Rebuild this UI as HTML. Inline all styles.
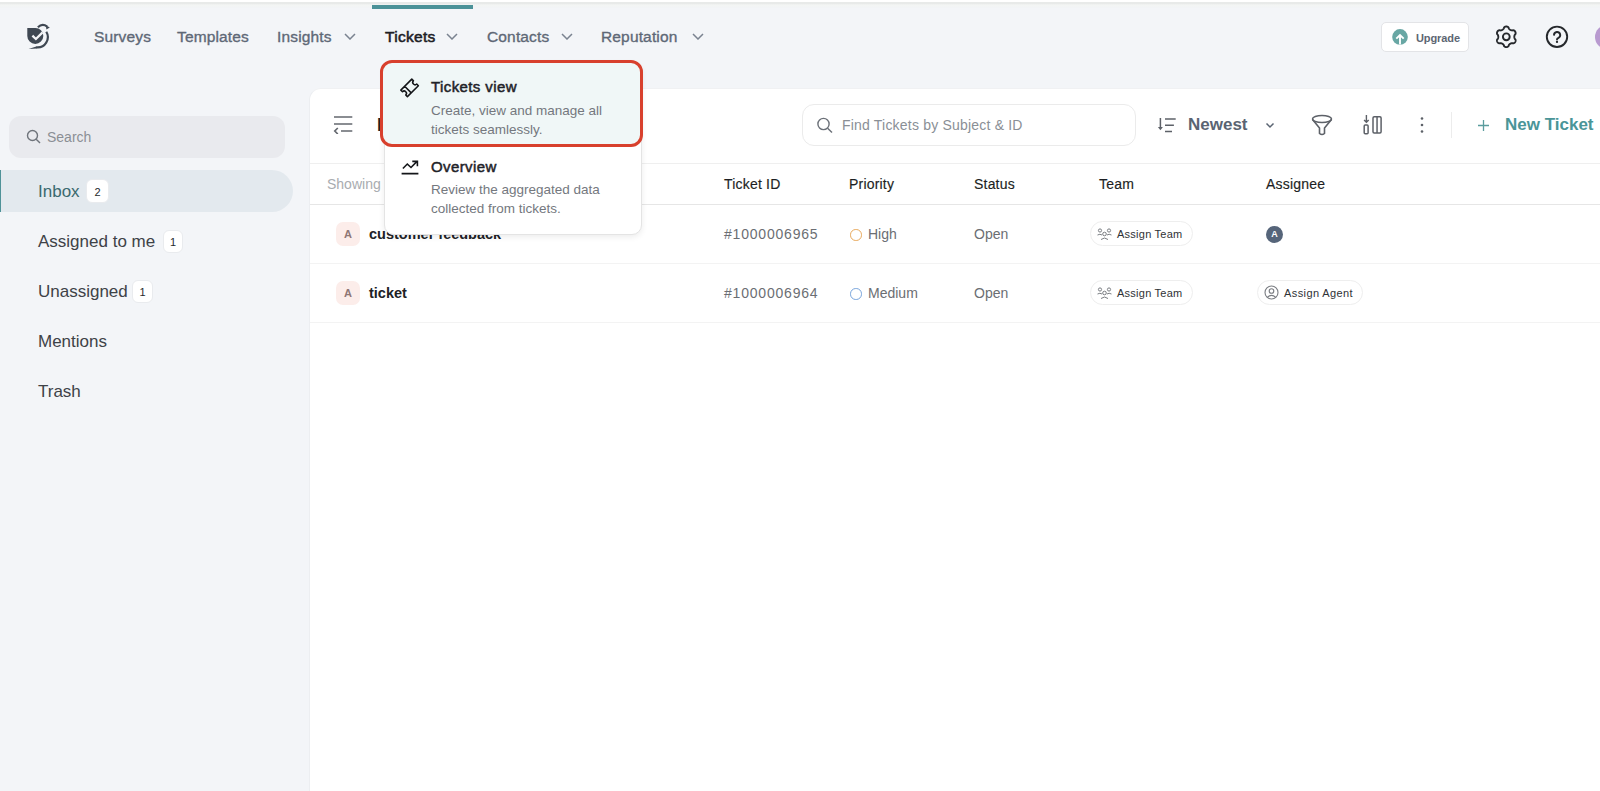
<!DOCTYPE html>
<html><head><meta charset="utf-8">
<style>
*{box-sizing:border-box;margin:0;padding:0}
html,body{width:1600px;height:791px;overflow:hidden}
body{background:#f3f5f8;font-family:"Liberation Sans",sans-serif;position:relative;color:#202226}
.a{position:absolute;white-space:nowrap}
#topstrip{left:0;top:0;width:1600px;height:2px;background:#fff}
#topline{left:0;top:2px;width:1600px;height:6px;background:linear-gradient(#e8eae9 0px,#e8eae9 1.5px,#f3f5f4 3px,#f2f4f6 6px)}
.nav{font-size:15.5px;letter-spacing:0.15px;color:#5e6876;top:28px;line-height:18px;-webkit-text-stroke:0.35px #5e6876}
.chev{width:12px;height:7px}
#panel{left:309px;top:88px;width:1300px;height:720px;background:#fff;border-top-left-radius:12px;border-left:1px solid #eceef1;border-top:1px solid #f0f1f3}
.side{font-size:17px;color:#3e4247;left:38px;line-height:20px;margin-top:1px}
.badge{background:#fff;border-radius:6px;font-size:11px;color:#26292d;text-align:center;border:1px solid #e9ebee}
.th{font-size:14px;letter-spacing:0.2px;-webkit-text-stroke:0.15px #1d1f23;color:#1d1f23;top:176px;line-height:16px}
.td{font-size:14px;color:#6b6e73;line-height:16px}
.tid{letter-spacing:0.8px}
.hline{left:310px;width:1290px;height:1px}
.pill{height:25px;border:1px solid #eeeeee;border-radius:13px;background:#fff}
.pill span{position:absolute;font-size:11px;letter-spacing:0.25px;color:#2f3236;top:5px;line-height:14px}
</style></head><body>
<div class="a" id="topstrip"></div>
<div class="a" id="topline"></div>

<!-- logo -->
<svg class="a" style="left:20px;top:18px" width="40" height="38" viewBox="0 0 40 38">
  <path d="M7.3 9.9 H15.4 A8 8 0 1 1 7.3 17.9 Z" fill="#3f4853"/>
  <path d="M12.4 17.6 L15.9 21 L22.6 14.4" stroke="#f3f4f7" stroke-width="2.3" fill="none"/>
  <path d="M17.9 9.2 Q22.3 4.8 27.2 8.6" stroke="#3f4853" stroke-width="2.2" fill="none"/>
  <path d="M25.8 7.2 L29.8 9.5 L26.4 11.4 Z" fill="#3f4853"/>
  <path d="M26.3 13.8 A10.3 10.3 0 0 1 16.5 29.4" stroke="#3f4853" stroke-width="2.2" fill="none"/><path d="M17 28.2 L8.6 30.9 L17 30.6 Z" fill="#3f4853"/>
</svg>

<!-- nav -->
<div class="a nav" style="left:94px">Surveys</div>
<div class="a nav" style="left:177px">Templates</div>
<div class="a nav" style="left:277px">Insights</div>
<svg class="a chev" style="left:344px;top:33px" viewBox="0 0 12 7"><path d="M1 1 L6 6 L11 1" stroke="#7a8390" stroke-width="1.5" fill="none"/></svg>
<div class="a" style="left:372px;top:5px;width:101px;height:3.5px;background:#4b9298"></div>
<div class="a nav" style="left:385px;color:#1d2025;font-weight:normal;letter-spacing:0.3px;font-size:15.5px;-webkit-text-stroke:0.55px #1d2025">Tickets</div>
<svg class="a chev" style="left:446px;top:33px" viewBox="0 0 12 7"><path d="M1 1 L6 6 L11 1" stroke="#7a8390" stroke-width="1.5" fill="none"/></svg>
<div class="a nav" style="left:487px">Contacts</div>
<svg class="a chev" style="left:561px;top:33px" viewBox="0 0 12 7"><path d="M1 1 L6 6 L11 1" stroke="#7a8390" stroke-width="1.5" fill="none"/></svg>
<div class="a nav" style="left:601px">Reputation</div>
<svg class="a chev" style="left:692px;top:33px" viewBox="0 0 12 7"><path d="M1 1 L6 6 L11 1" stroke="#7a8390" stroke-width="1.5" fill="none"/></svg>

<!-- right top -->
<div class="a" style="left:1381px;top:22px;width:88px;height:30px;background:#fff;border:1px solid #e3e4e7;border-radius:5px"></div>
<svg class="a" style="left:1391px;top:28px" width="18" height="18" viewBox="0 0 18 18"><circle cx="9" cy="8.9" r="7.8" fill="#68a7a4"/><path d="M9 16.6 V7.2 M5.3 10.7 L9 7 L12.7 10.7" stroke="#fff" stroke-width="1.9" fill="none"/></svg>
<div class="a" style="left:1416px;top:31px;font-size:11px;letter-spacing:-0.1px;font-weight:bold;color:#5d6672;line-height:14px">Upgrade</div>
<svg class="a" style="left:1494px;top:25px" width="25" height="25" viewBox="0 0 25 25"><path d="M20.30 11.80 L20.31 11.52 L20.34 11.24 L20.39 10.95 L20.47 10.65 L20.56 10.34 L20.69 10.02 L20.89 9.66 L21.38 9.20 L21.54 8.80 L21.61 8.41 L21.62 8.03 L21.58 7.67 L21.50 7.31 L21.38 6.97 L21.22 6.65 L21.02 6.35 L20.79 6.07 L20.52 5.83 L20.22 5.61 L19.89 5.43 L19.52 5.30 L19.10 5.24 L18.45 5.43 L18.04 5.42 L17.69 5.37 L17.38 5.30 L17.08 5.22 L16.81 5.12 L16.55 5.00 L16.30 4.87 L16.06 4.72 L15.83 4.56 L15.61 4.37 L15.39 4.15 L15.17 3.91 L14.95 3.64 L14.74 3.29 L14.59 2.63 L14.32 2.29 L14.02 2.04 L13.70 1.84 L13.36 1.69 L13.01 1.59 L12.66 1.52 L12.30 1.50 L11.94 1.52 L11.59 1.59 L11.24 1.69 L10.90 1.84 L10.58 2.04 L10.28 2.29 L10.01 2.63 L9.86 3.29 L9.65 3.64 L9.43 3.91 L9.21 4.15 L8.99 4.37 L8.77 4.56 L8.54 4.72 L8.30 4.87 L8.05 5.00 L7.79 5.12 L7.52 5.22 L7.22 5.30 L6.91 5.37 L6.56 5.42 L6.15 5.43 L5.50 5.24 L5.08 5.30 L4.71 5.43 L4.38 5.61 L4.08 5.83 L3.81 6.07 L3.58 6.35 L3.38 6.65 L3.22 6.97 L3.10 7.31 L3.02 7.67 L2.98 8.03 L2.99 8.41 L3.06 8.80 L3.22 9.20 L3.71 9.66 L3.91 10.02 L4.04 10.34 L4.13 10.65 L4.21 10.95 L4.26 11.24 L4.29 11.52 L4.30 11.80 L4.29 12.08 L4.26 12.36 L4.21 12.65 L4.13 12.95 L4.04 13.26 L3.91 13.58 L3.71 13.94 L3.22 14.40 L3.06 14.80 L2.99 15.19 L2.98 15.57 L3.02 15.93 L3.10 16.29 L3.22 16.63 L3.38 16.95 L3.58 17.25 L3.81 17.53 L4.08 17.77 L4.38 17.99 L4.71 18.17 L5.08 18.30 L5.50 18.36 L6.15 18.17 L6.56 18.18 L6.91 18.23 L7.22 18.30 L7.52 18.38 L7.79 18.48 L8.05 18.60 L8.30 18.73 L8.54 18.88 L8.77 19.04 L8.99 19.23 L9.21 19.45 L9.43 19.69 L9.65 19.96 L9.86 20.31 L10.01 20.97 L10.28 21.31 L10.58 21.56 L10.90 21.76 L11.24 21.91 L11.59 22.01 L11.94 22.08 L12.30 22.10 L12.66 22.08 L13.01 22.01 L13.36 21.91 L13.70 21.76 L14.02 21.56 L14.32 21.31 L14.59 20.97 L14.74 20.31 L14.95 19.96 L15.17 19.69 L15.39 19.45 L15.61 19.23 L15.83 19.04 L16.06 18.88 L16.30 18.73 L16.55 18.60 L16.81 18.48 L17.08 18.38 L17.38 18.30 L17.69 18.23 L18.04 18.18 L18.45 18.17 L19.10 18.36 L19.52 18.30 L19.89 18.17 L20.22 17.99 L20.52 17.77 L20.79 17.53 L21.02 17.25 L21.22 16.95 L21.38 16.63 L21.50 16.29 L21.58 15.93 L21.62 15.57 L21.61 15.19 L21.54 14.80 L21.38 14.40 L20.89 13.94 L20.69 13.58 L20.56 13.26 L20.47 12.95 L20.39 12.65 L20.34 12.36 L20.31 12.08 Z" stroke="#25282c" stroke-width="1.9" fill="none" stroke-linejoin="round"/><circle cx="12.3" cy="11.8" r="3.4" stroke="#25282c" stroke-width="1.9" fill="none"/></svg>
<svg class="a" style="left:1544px;top:24px" width="26" height="26" viewBox="0 0 26 26"><circle cx="13" cy="12.8" r="10.2" stroke="#25282c" stroke-width="1.9" fill="none"/><g transform="translate(13 13.9)"><path d="M-3 -3 A3.1 3.1 0 1 1 1.5 -0.1 Q0 0.6 0 1.6" stroke="#25282c" stroke-width="1.9" fill="none" stroke-linecap="round"/><circle cx="0" cy="4.0" r="1.15" fill="#25282c"/></g></svg>
<div class="a" style="left:1595px;top:25px;width:24px;height:24px;border-radius:50%;background:#b89ad0"></div>

<!-- sidebar -->
<div class="a" style="left:9px;top:116px;width:276px;height:42px;background:#e9eaee;border-radius:12px"></div>
<svg class="a" style="left:26px;top:129px" width="16" height="16" viewBox="0 0 16 16"><circle cx="6.5" cy="6.5" r="5" stroke="#6f747b" stroke-width="1.4" fill="none"/><path d="M10.2 10.2 L14 14" stroke="#6f747b" stroke-width="1.4"/></svg>
<div class="a" style="left:47px;top:129px;font-size:14px;color:#8b8f95;line-height:16px">Search</div>

<div class="a" style="left:0;top:170px;width:293px;height:42px;background:#e3e9ee;border-radius:0 21px 21px 0"></div>
<div class="a" style="left:0;top:170px;width:1.2px;height:42px;background:#4f9298"></div>
<div class="a side" style="top:181px;color:#3b6a6f">Inbox</div>
<div class="a badge" style="left:86px;top:179px;width:23px;height:24px;line-height:24px">2</div>
<div class="a side" style="top:231px">Assigned to me</div>
<div class="a badge" style="left:163px;top:230px;width:20px;height:23px;line-height:23px">1</div>
<div class="a side" style="top:281px">Unassigned</div>
<div class="a badge" style="left:132px;top:280px;width:21px;height:23px;line-height:23px">1</div>
<div class="a side" style="top:331px">Mentions</div>
<div class="a side" style="top:381px">Trash</div>

<!-- main panel -->
<div class="a" id="panel"></div>
<svg class="a" style="left:332px;top:114px" width="22" height="20" viewBox="0 0 22 20"><path d="M2 3 H20.3 M2 10 H20.3 M9 17 H20.3 M5.8 14 L2.8 17 L5.8 20" stroke="#64686f" stroke-width="1.7" fill="none"/></svg>
<div class="a" style="left:377px;top:115px;font-size:18px;font-weight:bold;color:#202226;line-height:20px">Inbox</div>

<div class="a" style="left:802px;top:104px;width:334px;height:42px;border:1px solid #ebebeb;border-radius:12px;background:#fff"></div>
<svg class="a" style="left:816px;top:117px" width="18" height="17" viewBox="0 0 18 17"><circle cx="7.5" cy="7" r="5.6" stroke="#6b7078" stroke-width="1.4" fill="none"/><path d="M11.6 11.2 L16 15.6" stroke="#6b7078" stroke-width="1.4"/></svg>
<div class="a" style="left:842px;top:117px;font-size:14px;letter-spacing:0.2px;color:#8a8f96;line-height:16px">Find Tickets by Subject &amp; ID</div>

<svg class="a" style="left:1157px;top:116px" width="22" height="18" viewBox="0 0 22 18"><path d="M3.4 2 V12" stroke="#5d6168" stroke-width="1.5" fill="none"/><path d="M0.9 11 L3.4 14.2 L5.9 11 Z" fill="#5d6168"/><path d="M8 3 H18.7 M8 9.3 H16.9 M8 15.4 H15" stroke="#5d6168" stroke-width="1.5" fill="none"/></svg>
<div class="a" style="left:1188px;top:116px;font-size:17px;font-weight:bold;color:#5a6472;line-height:18px">Newest</div>
<svg class="a" style="left:1265px;top:122px" width="10" height="7" viewBox="0 0 10 7"><path d="M1.5 1.5 L5 5 L8.5 1.5" stroke="#5a6472" stroke-width="1.5" fill="none"/></svg>
<svg class="a" style="left:1310px;top:114px" width="24" height="22" viewBox="0 0 24 22"><ellipse cx="12" cy="5" rx="9.5" ry="3.5" stroke="#5d6168" stroke-width="1.6" fill="none"/><path d="M2.5 5.5 L9.5 14 V19.5 Q12 21.5 14.5 19.5 V14 L21.5 5.5" stroke="#5d6168" stroke-width="1.6" fill="none" stroke-linejoin="round"/></svg>
<svg class="a" style="left:1361px;top:114px" width="23" height="22" viewBox="0 0 23 22"><path d="M5.4 1 V8.2 M3.1 6 L5.4 8.3 L7.7 6" stroke="#5d6168" stroke-width="1.4" fill="none"/><rect x="3.2" y="10.9" width="3.9" height="8.9" rx="1" stroke="#5d6168" stroke-width="1.5" fill="none"/><rect x="12" y="2.75" width="8.1" height="16.3" rx="1.2" stroke="#5d6168" stroke-width="1.5" fill="none"/><path d="M16.05 2.75 V19" stroke="#5d6168" stroke-width="1.5"/></svg>
<svg class="a" style="left:1419px;top:116px" width="6" height="18" viewBox="0 0 6 18"><circle cx="3" cy="2.5" r="1.3" fill="#5d6168"/><circle cx="3" cy="9" r="1.3" fill="#5d6168"/><circle cx="3" cy="15.5" r="1.3" fill="#5d6168"/></svg>
<div class="a" style="left:1451px;top:112px;width:1px;height:26px;background:#ececec"></div>
<svg class="a" style="left:1476px;top:118px" width="15" height="15" viewBox="0 0 15 15"><path d="M7.5 2 V13 M2 7.5 H13" stroke="#5a9c9d" stroke-width="1.3" fill="none"/></svg>
<div class="a" style="left:1505px;top:116px;font-size:17px;font-weight:bold;color:#4a9598;line-height:18px">New Ticket</div>

<div class="a hline" style="top:163px;background:#efefef"></div>
<div class="a" style="left:327px;top:176px;font-size:14px;color:#a9acb0;line-height:16px">Showing 2 tickets</div>
<div class="a th" style="left:724px">Ticket ID</div>
<div class="a th" style="left:849px">Priority</div>
<div class="a th" style="left:974px">Status</div>
<div class="a th" style="left:1099px">Team</div>
<div class="a th" style="left:1266px">Assignee</div>
<div class="a hline" style="top:204px;background:#e6e6e6"></div>

<!-- row 1 -->
<div class="a" style="left:336px;top:222px;width:24px;height:24px;border-radius:7px;background:#fcedea;text-align:center;font-size:11px;font-weight:bold;line-height:24px;color:#8f7775">A</div>
<div class="a" style="left:369px;top:226px;font-size:14.5px;font-weight:bold;color:#202226;line-height:16px">customer feedback</div>
<div class="a td tid" style="left:724px;top:226px">#1000006965</div>
<div class="a" style="left:850px;top:229px;width:11.5px;height:11.5px;border:1.6px solid #e8a95c;border-radius:50%"></div>
<div class="a td" style="left:868px;top:226px">High</div>
<div class="a td" style="left:974px;top:226px">Open</div>
<div class="a pill" style="left:1090px;top:221px;width:103px"><svg class="a" style="left:6px;top:6px" width="15" height="12" viewBox="0 0 15 12"><circle cx="3" cy="2.5" r="1.6" stroke="#7a7d82" stroke-width="1" fill="none"/><circle cx="12" cy="2.5" r="1.6" stroke="#7a7d82" stroke-width="1" fill="none"/><circle cx="7.5" cy="6" r="1.8" stroke="#7a7d82" stroke-width="1" fill="none"/><path d="M0.5 7 Q3 5.5 5 7 M10 7 Q12 5.5 14.5 7 M4 11.5 Q7.5 8.5 11 11.5" stroke="#7a7d82" stroke-width="1" fill="none"/></svg><span style="left:26px">Assign Team</span></div>
<div class="a" style="left:1266px;top:226px;width:17px;height:17px;border-radius:50%;background:#56657a;color:#fff;font-size:9px;font-weight:bold;text-align:center;line-height:17px">A</div>
<div class="a hline" style="top:263px;background:#f3f3f3"></div>

<!-- row 2 -->
<div class="a" style="left:336px;top:281px;width:24px;height:24px;border-radius:7px;background:#fcedea;text-align:center;font-size:11px;font-weight:bold;line-height:24px;color:#8f7775">A</div>
<div class="a" style="left:369px;top:285px;font-size:14.5px;font-weight:bold;color:#202226;line-height:16px">ticket</div>
<div class="a td tid" style="left:724px;top:285px">#1000006964</div>
<div class="a" style="left:850px;top:288px;width:11.5px;height:11.5px;border:1.6px solid #79a5dc;border-radius:50%"></div>
<div class="a td" style="left:868px;top:285px">Medium</div>
<div class="a td" style="left:974px;top:285px">Open</div>
<div class="a pill" style="left:1090px;top:280px;width:103px"><svg class="a" style="left:6px;top:6px" width="15" height="12" viewBox="0 0 15 12"><circle cx="3" cy="2.5" r="1.6" stroke="#7a7d82" stroke-width="1" fill="none"/><circle cx="12" cy="2.5" r="1.6" stroke="#7a7d82" stroke-width="1" fill="none"/><circle cx="7.5" cy="6" r="1.8" stroke="#7a7d82" stroke-width="1" fill="none"/><path d="M0.5 7 Q3 5.5 5 7 M10 7 Q12 5.5 14.5 7 M4 11.5 Q7.5 8.5 11 11.5" stroke="#7a7d82" stroke-width="1" fill="none"/></svg><span style="left:26px">Assign Team</span></div>
<div class="a pill" style="left:1257px;top:280px;width:106px"><svg class="a" style="left:6px;top:4px" width="15" height="15" viewBox="0 0 15 15"><circle cx="7.5" cy="7.5" r="6.5" stroke="#7a7d82" stroke-width="1.1" fill="none"/><circle cx="7.5" cy="6" r="2.3" stroke="#7a7d82" stroke-width="1.1" fill="none"/><path d="M3.2 12.3 Q7.5 8.5 11.8 12.3" stroke="#7a7d82" stroke-width="1.1" fill="none"/></svg><span style="left:26px;letter-spacing:0.4px">Assign Agent</span></div>
<div class="a hline" style="top:322px;background:#f3f3f3"></div>

<!-- dropdown -->
<div class="a" style="left:384px;top:62px;width:258px;height:173px;background:#fff;border:1px solid #e4e4e4;border-radius:10px;box-shadow:0 2px 6px rgba(0,0,0,0.08)"></div>
<div class="a" style="left:380px;top:60px;width:263px;height:87px;background:#f0f7f7;border:3px solid #d8402d;border-radius:12px"></div>
<svg class="a" style="left:396px;top:74px" width="28" height="28" viewBox="0 0 28 28"><g transform="translate(13.6 13.9) rotate(-45)"><path d="M-7.75 -4.65 H7.75 V-2.3 A2.3 2.3 0 0 0 7.75 2.3 V4.65 H-7.75 V2.3 A2.3 2.3 0 0 0 -7.75 -2.3 Z M-2.35 -4.65 V4.65" stroke="#141619" stroke-width="1.55" fill="none" stroke-linejoin="round"/></g></svg>
<div class="a" style="left:431px;top:79px;font-size:15px;letter-spacing:0.4px;font-weight:normal;-webkit-text-stroke:0.5px #1f2328;color:#1f2328;line-height:16px">Tickets view</div>
<div class="a" style="left:431px;top:101px;font-size:13.5px;color:#74787e;line-height:19px">Create, view and manage all<br>tickets seamlessly.</div>
<svg class="a" style="left:396px;top:154px" width="28" height="26" viewBox="0 0 28 26"><path d="M5.6 19.6 H22.4 M6.9 14.5 L11.3 10 L15 13.5 L21 7.4 M16.3 7.4 H21.4 V12.2" stroke="#141619" stroke-width="1.6" fill="none"/></svg>
<div class="a" style="left:431px;top:159px;font-size:15px;letter-spacing:0.4px;font-weight:normal;-webkit-text-stroke:0.5px #1f2328;color:#1f2328;line-height:16px">Overview</div>
<div class="a" style="left:431px;top:181px;font-size:13.5px;color:#74787e;line-height:18.5px">Review the aggregated data<br>collected from tickets.</div>
</body></html>
